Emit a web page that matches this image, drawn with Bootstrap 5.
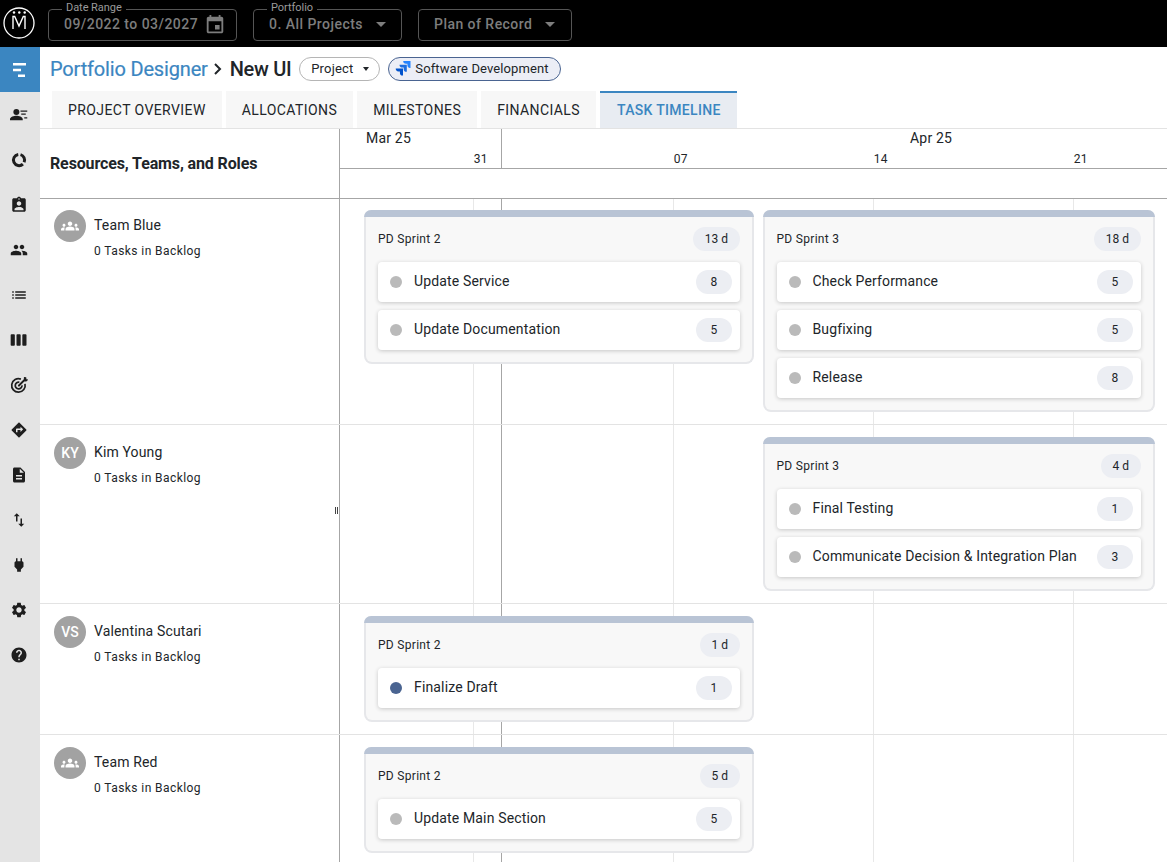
<!doctype html>
<html lang="en">
<head>
<meta charset="utf-8">
<title>Portfolio Designer</title>
<link href="https://cdn.jsdelivr.net/npm/bootstrap@5.3.0/dist/css/bootstrap.min.css" rel="stylesheet">
<style>
html,body{height:100%;overflow:hidden}
body{font-family:Roboto,"Liberation Sans",sans-serif;color:#212529;background:#fff}
.topbar{height:47px;background:#000;padding-left:3px;gap:16px}
.logo-svg{width:32px;height:32px;margin-top:-1px;margin-right:-3px;flex:none}
.hfield{position:relative;height:32px;border:1px solid #555;border-radius:4px;color:#7d7d7d;font-weight:500;font-size:14px;letter-spacing:.46px;padding:0 6px 0 15px;margin-top:2px;white-space:nowrap}
.hlabel{position:absolute;top:-9px;left:13px;background:#000;color:#9a9a9a;font-size:11px;font-weight:400;letter-spacing:-.05px;line-height:14px;padding:0 4px}
.hcaret{width:0;height:0;border-left:5px solid transparent;border-right:5px solid transparent;border-top:5px solid #7d7d7d;margin-left:13px}
.hfield-date{width:189px}.hfield-port{width:149px}.hfield-plan{width:154px}
.hcal{width:22px;height:22px;fill:#7d7d7d;margin-left:6px;flex:none}
.shell{height:815px}
.sidenav{width:40px;background:#e4e4e4;flex:none}
.sideitem{height:45px;padding-right:2px}
.sideitem svg{width:18px;height:18px;fill:#1e1e1e}
.sideitem svg.ico-lg{width:20px;height:20px}
.sideitem-on{background:#3b86c1}
.sideitem-on svg{fill:#fff}
.ico-line{fill:none;stroke:#1e1e1e}
.mainpane{min-width:0}
.titlebar{height:44px;padding-left:10px}
.ttl-link{font-size:20px;font-weight:400;color:#3b86c1;text-decoration:none;letter-spacing:-.17px;-webkit-text-stroke:.2px #3b86c1}
.ttl-sep{width:10px;height:14px;margin:0 7px 0 5px;fill:none;stroke:#212529;stroke-width:2}
.ttl-now{font-size:20px;font-weight:500;color:#212529;margin-right:8px;letter-spacing:-.3px}
.chip{height:24px;border-radius:12px;border:1px solid #b5b5b5;font-size:13px;letter-spacing:.2px;background:#fff}
.chip-proj{width:81px;margin-right:8px;justify-content:center}
.chip-soft{width:173px;background:#eceef6;border-color:#4a6491;padding-left:6px;letter-spacing:.1px}
.chip-caret{width:0;height:0;border-left:3.5px solid transparent;border-right:3.5px solid transparent;border-top:4px solid #212529;margin-left:9px}
.jira{width:16px;height:16px;margin-right:4px}
.tabrow{height:38px;padding-left:12px;gap:4px;border-bottom:1px solid #e3e3e3}
.tabitem{background:#f7f7f7;font-size:14px;letter-spacing:.41px;color:#212529;text-transform:uppercase;padding:0 16px;height:37px;line-height:38px}
.tabitem-on{background:#e8ecf2;color:#3b86c1;font-weight:500;border-top:2px solid #3b86c1;line-height:34px;letter-spacing:.3px;padding-left:17px;padding-right:16px}
.tl-head{height:70px;border-bottom:1px solid #a6a6a6}
.leftcell{width:300px;flex:none;border-right:1px solid #a6a6a6}
.res-title{font-size:16px;font-weight:700;padding-left:10px;letter-spacing:-.13px}
.monthrow{height:40px;position:relative;border-bottom:1px solid #a6a6a6}
.mlabel{position:absolute;top:-1px;font-size:14px;letter-spacing:.2px}
.dlabel{position:absolute;top:21px;font-size:12px;letter-spacing:.4px;width:40px;text-align:right}
.curline{position:absolute;width:1px;top:0;bottom:0;background:#a6a6a6}
.grid-area{position:relative;height:663px;overflow:hidden}
.vline{position:absolute;top:0;bottom:0;width:1px;background:#e8e8e8}
.vline-strong{background:#a6a6a6;left:461px}
.lane{position:relative;border-bottom:1px solid #e3e3e3}
.lane-a{height:226px}.lane-b{height:179px}.lane-c{height:131px}.lane-d{height:130px}
.lane-left{background:#fff;padding:12px 0 0 14px;height:100%;position:relative;z-index:1}
.lane-a .lane-left{padding-top:11px}
.lane-canvas{flex:1;position:relative}
.avatar{width:32px;height:32px;border-radius:50%;background:#a2a2a2;color:#fff;font-size:14px;font-weight:500;flex:none;margin-right:8px}
.avatar svg{width:18px;height:18px;fill:#fff}
.res-name{font-size:14px;letter-spacing:.14px;line-height:20px;margin-top:5px}
.res-sub{font-size:12px;letter-spacing:.42px;line-height:16px;margin-top:8px}
.grip{position:absolute;right:1px;width:3px;height:7px;border-left:1px solid #444;border-right:1px solid #444;z-index:2}
.sprint{position:absolute;background:#f8f8f8;border:2px solid #e6e7ea;border-top:0;border-radius:8px;padding:0 12px 12px}
.sprint::before{content:"";display:block;height:7px;background:#b9c4d5;margin:0 -14px;border-radius:8px 8px 0 0}
.sprint-head{height:45px;font-size:12px;letter-spacing:.3px;padding-bottom:1px}
.sprint-pill{background:#eceef3;border-radius:12px;height:24px;line-height:24px;padding:0 12px;font-size:12px;letter-spacing:0}
.taskrow{height:40px;background:#fff;border-radius:4px;box-shadow:0 1px 4px rgba(0,0,0,.2);padding:0 8px 0 12px;font-size:14px;letter-spacing:.15px;margin-bottom:8px}
.taskrow:last-child{margin-bottom:0}
.tasktxt{margin-top:-2px}
.tdot{width:12px;height:12px;border-radius:50%;background:#bababa;margin-right:12px;flex:none}
.tdot-act{background:#4a6491}
.task-pill{width:36px;height:24px;line-height:24px;border-radius:12px;background:#eceef3;font-size:12px;text-align:center;margin-left:auto}
</style>
</head>
<body>
<header class="topbar d-flex align-items-center">
  <svg class="logo-svg" viewBox="0 0 32 32" aria-label="logo"><circle cx="16" cy="16" r="15" fill="none" stroke="#fff" stroke-width="1.300"/><path d="M10 22V9.500h1.700L16 19l4.300-9.500H22V22" fill="none" stroke="#fff" stroke-width="1.400"/><circle cx="11" cy="5.500" r="1.200" fill="#fff"/><circle cx="16.300" cy="5.500" r="1.200" fill="#fff"/><circle cx="21.700" cy="5.500" r="1.200" fill="#fff"/></svg>
  <div class="hfield hfield-date d-flex align-items-center"><span class="hlabel">Date Range</span><span>09/2022 to 03/2027</span><svg class="hcal" viewBox="0 0 24 24"><path d="M17 12h-5v5h5v-5zM16 1v2H8V1H6v2H5c-1.110 0-1.990.9-1.990 2L3 19c0 1.100.89 2 2 2h14c1.100 0 2-.9 2-2V5c0-1.100-.9-2-2-2h-1V1h-2zm3 18H5V8h14v11z"/></svg></div>
  <div class="hfield hfield-port d-flex align-items-center"><span class="hlabel">Portfolio</span><span>0. All Projects</span><span class="hcaret"></span></div>
  <div class="hfield hfield-plan d-flex align-items-center"><span>Plan of Record</span><span class="hcaret"></span></div>
</header>
<div class="shell d-flex">
  <nav class="sidenav d-flex flex-column">
    <div class="sideitem sideitem-on d-flex align-items-center justify-content-center"><svg viewBox="0 0 18 18"><path d="M3 2h13v2.400H3zM3 7.800h8v2.400H3zM8 13.600h7V16H8z"/></svg></div>
    <div class="sideitem d-flex align-items-center justify-content-center"><svg viewBox="0 0 24 24"><circle cx="8.500" cy="8" r="4"/><path d="M0 19v-1.500C0 14.500 5.500 13 8.500 13s8.500 1.500 8.500 4.500V19zM14 6h9v1.800h-9zM15 10h6v1.800h-6zM19 15h4v1.800h-4z"/></svg></div>
    <div class="sideitem d-flex align-items-center justify-content-center"><svg viewBox="0 0 24 24"><path class="ico-line" stroke-width="4" d="M14 4.800A7.500 7.500 0 0 1 18.800 15"/><path class="ico-line" stroke-width="4" d="M17.200 17.500A7.500 7.500 0 1 1 11 4.600"/></svg></div>
    <div class="sideitem d-flex align-items-center justify-content-center"><svg viewBox="0 0 24 24"><path d="M19 3h-4.180C14.400 1.840 13.300 1 12 1c-1.300 0-2.400.84-2.820 2H5c-1.100 0-2 .9-2 2v14c0 1.100.9 2 2 2h14c1.100 0 2-.9 2-2V5c0-1.100-.9-2-2-2zm-7 0c.55 0 1 .45 1 1s-.45 1-1 1-1-.45-1-1 .45-1 1-1zm0 4c1.660 0 3 1.340 3 3s-1.340 3-3 3-3-1.340-3-3 1.340-3 3-3zm6 12H6v-1.400c0-2 4-3.100 6-3.100s6 1.100 6 3.100V19z"/></svg></div>
    <div class="sideitem d-flex align-items-center justify-content-center"><svg viewBox="0 0 24 24"><path d="M16 11c1.660 0 2.990-1.340 2.990-3S17.660 5 16 5c-1.660 0-3 1.340-3 3s1.340 3 3 3zm-8 0c1.660 0 2.990-1.340 2.990-3S9.660 5 8 5C6.340 5 5 6.340 5 8s1.340 3 3 3zm0 2c-2.330 0-7 1.170-7 3.500V19h14v-2.500c0-2.330-4.670-3.500-7-3.500zm8 0c-.29 0-.62.02-.97.05 1.160.84 1.970 1.970 1.970 3.450V19h6v-2.500c0-2.330-4.670-3.500-7-3.500z"/></svg></div>
    <div class="sideitem d-flex align-items-center justify-content-center"><svg viewBox="0 0 24 24"><path d="M3 13h2v-2H3v2zm0 4h2v-2H3v2zm0-8h2V7H3v2zm4 4h14v-2H7v2zm0 4h14v-2H7v2zM7 7v2h14V7H7z"/></svg></div>
    <div class="sideitem d-flex align-items-center justify-content-center"><svg class="ico-lg" viewBox="0 0 24 24"><path d="M6 5H3c-.55 0-1 .45-1 1v12c0 .55.45 1 1 1h3c.55 0 1-.45 1-1V6c0-.55-.45-1-1-1zm14 0h-3c-.55 0-1 .45-1 1v12c0 .55.45 1 1 1h3c.55 0 1-.45 1-1V6c0-.55-.45-1-1-1zm-7 0h-3c-.55 0-1 .45-1 1v12c0 .55.45 1 1 1h3c.55 0 1-.45 1-1V6c0-.55-.45-1-1-1z"/></svg></div>
    <div class="sideitem d-flex align-items-center justify-content-center"><svg viewBox="0 0 24 24"><path class="ico-line" stroke-width="2.300" d="M14.500 4.200A9 9 0 1 0 20 10.500M12.500 8.300A4.500 4.500 0 1 0 16 12.500"/><path d="M10.400 12.200l8-8 .2-3 3 .3.3 2.800 2.800.3-3 2.800h-2.600l-7.300 7.200z"/></svg></div>
    <div class="sideitem d-flex align-items-center justify-content-center"><svg viewBox="0 0 24 24"><path d="M21.710 11.290l-9-9c-.39-.39-1.020-.39-1.410 0l-9 9c-.39.39-.39 1.020 0 1.410l9 9c.39.39 1.020.39 1.410 0l9-9c.39-.38.39-1.010 0-1.410zM14 14.500V12h-4v3H8v-4c0-.55.45-1 1-1h5V7.500l3.500 3.500-3.500 3.500z"/></svg></div>
    <div class="sideitem d-flex align-items-center justify-content-center"><svg viewBox="0 0 24 24"><path d="M14 2H6c-1.100 0-1.990.9-1.990 2L4 20c0 1.100.89 2 1.990 2H18c1.100 0 2-.9 2-2V8l-6-6zm2 16H8v-2h8v2zm0-4H8v-2h8v2zm-3-5V3.500L18.500 9H13z"/></svg></div>
    <div class="sideitem d-flex align-items-center justify-content-center"><svg viewBox="0 0 24 24"><path d="M16 17.010V10h-2v7.010h-3L15 21l4-3.990h-3zM9 3L5 6.990h3V14h2V6.990h3L9 3z"/></svg></div>
    <div class="sideitem d-flex align-items-center justify-content-center"><svg viewBox="0 0 24 24"><path d="M16.010 7L16 3h-2v4h-4V3H8v4h-.01C7 6.990 6 7.990 6 8.990v5.490L9.500 18v3h5v-3l3.500-3.510v-5.500c0-1-1-2-1.990-1.990z"/></svg></div>
    <div class="sideitem d-flex align-items-center justify-content-center"><svg viewBox="0 0 24 24"><path d="M19.140 12.940c.04-.3.06-.61.06-.94 0-.32-.02-.64-.07-.94l2.030-1.580c.18-.14.23-.41.12-.61l-1.920-3.320c-.12-.22-.37-.29-.59-.22l-2.390.96c-.5-.38-1.030-.7-1.620-.94l-.36-2.540c-.04-.24-.24-.41-.48-.41h-3.840c-.24 0-.43.17-.47.41l-.36 2.540c-.59.24-1.130.57-1.620.94l-2.390-.96c-.22-.08-.47 0-.59.22L2.740 8.870c-.12.21-.08.47.12.61l2.030 1.580c-.05.3-.09.63-.09.94s.02.64.07.94l-2.030 1.580c-.18.14-.23.41-.12.61l1.920 3.320c.12.22.37.29.59.22l2.390-.96c.5.38 1.030.7 1.620.94l.36 2.540c.05.24.24.41.48.41h3.840c.24 0 .44-.17.47-.41l.36-2.540c.59-.24 1.130-.56 1.620-.94l2.390.96c.22.08.47 0 .59-.22l1.920-3.320c.12-.22.07-.47-.12-.61l-2.010-1.580zM12 15.600c-1.980 0-3.600-1.620-3.600-3.600s1.620-3.600 3.600-3.600 3.600 1.620 3.600 3.600-1.620 3.600-3.600 3.600z"/></svg></div>
    <div class="sideitem d-flex align-items-center justify-content-center"><svg viewBox="0 0 24 24"><path d="M12 2C6.480 2 2 6.480 2 12s4.480 10 10 10 10-4.480 10-10S17.520 2 12 2zm1 17h-2v-2h2v2zm2.070-7.750l-.9.92C13.450 12.900 13 13.500 13 15h-2v-.5c0-1.100.45-2.100 1.170-2.830l1.240-1.260c.37-.36.59-.86.59-1.410 0-1.100-.9-2-2-2s-2 .9-2 2H8c0-2.210 1.790-4 4-4s4 1.790 4 4c0 .88-.36 1.680-.93 2.250z"/></svg></div>
  </nav>
  <main class="mainpane flex-grow-1 d-flex flex-column">
    <div class="titlebar d-flex align-items-center">
      <a class="ttl-link" href="#">Portfolio Designer</a>
      <svg class="ttl-sep" viewBox="0 0 10 14"><path d="M2 2l5 5-5 5"/></svg>
      <span class="ttl-now">New UI</span>
      <span class="chip chip-proj d-flex align-items-center">Project<span class="chip-caret"></span></span>
      <span class="chip chip-soft d-flex align-items-center"><svg class="jira" viewBox="0 0 16 16"><path fill="#2684ff" d="M15.500 0H8.200a2.800 2.800 0 0 0 2.800 2.800h1.400v1.300a2.800 2.800 0 0 0 3.100 2.800z"/><path fill="#1f6fe0" d="M11.800 3.800H4.500a2.800 2.800 0 0 0 2.800 2.800h1.400v1.300a2.800 2.800 0 0 0 3.100 2.800z"/><path fill="#0052cc" d="M8 7.600H.7a2.800 2.800 0 0 0 2.800 2.800h1.400v1.300A2.800 2.800 0 0 0 8 14.500z"/></svg>Software Development</span>
    </div>
    <div class="tabrow d-flex">
      <div class="tabitem">Project Overview</div>
      <div class="tabitem">Allocations</div>
      <div class="tabitem">Milestones</div>
      <div class="tabitem">Financials</div>
      <div class="tabitem tabitem-on">Task Timeline</div>
    </div>
    <div class="tl-head d-flex">
      <div class="leftcell res-title d-flex align-items-center">Resources, Teams, and Roles</div>
      <div class="flex-grow-1">
        <div class="monthrow">
          <span class="mlabel" style="left:26px">Mar 25</span>
          <span class="mlabel" style="left:570px">Apr 25</span>
          <span class="dlabel" style="left:108px">31</span>
          <span class="dlabel" style="left:308px">07</span>
          <span class="dlabel" style="left:508px">14</span>
          <span class="dlabel" style="left:708px">21</span>
          <span class="curline" style="left:161px"></span>
        </div>
      </div>
    </div>
    <div class="grid-area">
      <span class="vline" style="left:433px"></span>
      <span class="vline vline-strong"></span>
      <span class="vline" style="left:633px"></span>
      <span class="vline" style="left:833px"></span>
      <span class="vline" style="left:1033px"></span>

      <div class="lane lane-a d-flex">
        <div class="leftcell lane-left d-flex">
          <div class="avatar d-flex align-items-center justify-content-center"><svg viewBox="0 0 24 24"><path d="M4 13c1.100 0 2-.9 2-2 0-1.100-.9-2-2-2s-2 .9-2 2c0 1.100.9 2 2 2zm1.130 1.100C4.760 14.040 4.390 14 4 14c-.99 0-1.930.21-2.780.58C.48 14.900 0 15.620 0 16.430V18h4.500v-1.610c0-.83.23-1.610.63-2.290zM20 13c1.100 0 2-.9 2-2 0-1.100-.9-2-2-2s-2 .9-2 2c0 1.100.9 2 2 2zm4 3.430c0-.81-.48-1.530-1.220-1.850C21.930 14.210 20.990 14 20 14c-.39 0-.76.04-1.130.1.4.68.63 1.460.63 2.290V18H24v-1.570zm-7.760-2.780C15.070 13.130 13.630 12.750 12 12.750c-1.630 0-3.070.39-4.240.9C6.680 14.130 6 15.210 6 16.390V18h12v-1.610c0-1.180-.68-2.260-1.760-2.740zM12 12c1.660 0 3-1.340 3-3s-1.340-3-3-3-3 1.340-3 3 1.340 3 3 3z"/></svg></div>
          <div><div class="res-name">Team Blue</div><div class="res-sub">0 Tasks in Backlog</div></div>
        </div>
        <div class="lane-canvas">
          <div class="sprint" style="left:24px;top:11px;width:390px">
            <div class="sprint-head d-flex align-items-center justify-content-between"><span>PD Sprint 2</span><span class="sprint-pill">13 d</span></div>
            <div class="taskrow d-flex align-items-center"><span class="tdot"></span><span class="tasktxt">Update Service</span><span class="task-pill">8</span></div>
            <div class="taskrow d-flex align-items-center"><span class="tdot"></span><span class="tasktxt">Update Documentation</span><span class="task-pill">5</span></div>
          </div>
          <div class="sprint" style="left:422.500px;top:11px;width:392.500px">
            <div class="sprint-head d-flex align-items-center justify-content-between"><span>PD Sprint 3</span><span class="sprint-pill">18 d</span></div>
            <div class="taskrow d-flex align-items-center"><span class="tdot"></span><span class="tasktxt">Check Performance</span><span class="task-pill">5</span></div>
            <div class="taskrow d-flex align-items-center"><span class="tdot"></span><span class="tasktxt">Bugfixing</span><span class="task-pill">5</span></div>
            <div class="taskrow d-flex align-items-center"><span class="tdot"></span><span class="tasktxt">Release</span><span class="task-pill">8</span></div>
          </div>
        </div>
      </div>

      <div class="lane lane-b d-flex">
        <div class="leftcell lane-left d-flex">
          <div class="avatar d-flex align-items-center justify-content-center">KY</div>
          <div><div class="res-name">Kim Young</div><div class="res-sub">0 Tasks in Backlog</div></div>
          <span class="grip" style="top:82px"></span>
        </div>
        <div class="lane-canvas">
          <div class="sprint" style="left:422.500px;top:12px;width:392.500px">
            <div class="sprint-head d-flex align-items-center justify-content-between"><span>PD Sprint 3</span><span class="sprint-pill">4 d</span></div>
            <div class="taskrow d-flex align-items-center"><span class="tdot"></span><span class="tasktxt">Final Testing</span><span class="task-pill">1</span></div>
            <div class="taskrow d-flex align-items-center"><span class="tdot"></span><span class="tasktxt">Communicate Decision &amp; Integration Plan</span><span class="task-pill">3</span></div>
          </div>
        </div>
      </div>

      <div class="lane lane-c d-flex">
        <div class="leftcell lane-left d-flex">
          <div class="avatar d-flex align-items-center justify-content-center">VS</div>
          <div><div class="res-name">Valentina Scutari</div><div class="res-sub">0 Tasks in Backlog</div></div>
        </div>
        <div class="lane-canvas">
          <div class="sprint" style="left:24px;top:12px;width:390px">
            <div class="sprint-head d-flex align-items-center justify-content-between"><span>PD Sprint 2</span><span class="sprint-pill">1 d</span></div>
            <div class="taskrow d-flex align-items-center"><span class="tdot tdot-act"></span><span class="tasktxt">Finalize Draft</span><span class="task-pill">1</span></div>
          </div>
        </div>
      </div>

      <div class="lane lane-d d-flex">
        <div class="leftcell lane-left d-flex">
          <div class="avatar d-flex align-items-center justify-content-center"><svg viewBox="0 0 24 24"><path d="M4 13c1.100 0 2-.9 2-2 0-1.100-.9-2-2-2s-2 .9-2 2c0 1.100.9 2 2 2zm1.130 1.100C4.760 14.040 4.390 14 4 14c-.99 0-1.930.21-2.780.58C.48 14.900 0 15.620 0 16.430V18h4.500v-1.610c0-.83.23-1.610.63-2.290zM20 13c1.100 0 2-.9 2-2 0-1.100-.9-2-2-2s-2 .9-2 2c0 1.100.9 2 2 2zm4 3.430c0-.81-.48-1.530-1.220-1.850C21.930 14.210 20.990 14 20 14c-.39 0-.76.04-1.130.1.4.68.63 1.460.63 2.290V18H24v-1.570zm-7.760-2.780C15.070 13.130 13.630 12.750 12 12.750c-1.630 0-3.070.39-4.240.9C6.680 14.130 6 15.210 6 16.390V18h12v-1.610c0-1.180-.68-2.260-1.760-2.740zM12 12c1.660 0 3-1.340 3-3s-1.340-3-3-3-3 1.340-3 3 1.340 3 3 3z"/></svg></div>
          <div><div class="res-name">Team Red</div><div class="res-sub">0 Tasks in Backlog</div></div>
        </div>
        <div class="lane-canvas">
          <div class="sprint" style="left:24px;top:12px;width:390px">
            <div class="sprint-head d-flex align-items-center justify-content-between"><span>PD Sprint 2</span><span class="sprint-pill">5 d</span></div>
            <div class="taskrow d-flex align-items-center"><span class="tdot"></span><span class="tasktxt">Update Main Section</span><span class="task-pill">5</span></div>
          </div>
        </div>
      </div>
    </div>
  </main>
</div>
<script src="https://cdn.jsdelivr.net/npm/bootstrap@5.3.0/dist/js/bootstrap.bundle.min.js"></script>
</body>
</html>
